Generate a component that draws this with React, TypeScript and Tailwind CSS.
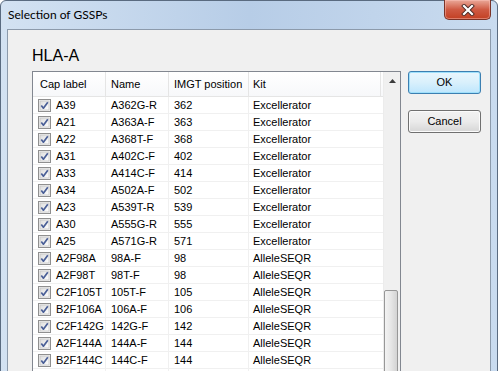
import React from "react";

const rows: [string, string, string, string][] = [
  ["A39", "A362G-R", "362", "Excellerator"],
  ["A21", "A363A-F", "363", "Excellerator"],
  ["A22", "A368T-F", "368", "Excellerator"],
  ["A31", "A402C-F", "402", "Excellerator"],
  ["A33", "A414C-F", "414", "Excellerator"],
  ["A34", "A502A-F", "502", "Excellerator"],
  ["A23", "A539T-R", "539", "Excellerator"],
  ["A30", "A555G-R", "555", "Excellerator"],
  ["A25", "A571G-R", "571", "Excellerator"],
  ["A2F98A", "98A-F", "98", "AlleleSEQR"],
  ["A2F98T", "98T-F", "98", "AlleleSEQR"],
  ["C2F105T", "105T-F", "105", "AlleleSEQR"],
  ["B2F106A", "106A-F", "106", "AlleleSEQR"],
  ["C2F142G", "142G-F", "142", "AlleleSEQR"],
  ["A2F144A", "144A-F", "144", "AlleleSEQR"],
  ["B2F144C", "144C-F", "144", "AlleleSEQR"],
];

function CheckBox() {
  return (
    <svg width="13" height="13" viewBox="0 0 13 13" className="shrink-0">
      <defs>
        <linearGradient id="cbg" x1="0" y1="0" x2="1" y2="1">
          <stop offset="0" stopColor="#dcdcdc" />
          <stop offset="1" stopColor="#ffffff" />
        </linearGradient>
      </defs>
      <rect x="0.5" y="0.5" width="12" height="12" fill="#f4f4f4" stroke="#8f8f8f" />
      <rect x="2" y="2" width="9" height="9" fill="url(#cbg)" stroke="#c6c6c6" strokeWidth="0.8" />
      <path d="M3.3 6.4 L5.4 9.2 L9.8 3.2" fill="none" stroke="#4a5f97" strokeWidth="1.7" strokeLinejoin="round" />
    </svg>
  );
}

function CloseButton() {
  return (
    <div className="mr-[6px] -mt-px w-[47px] h-[20px] rounded-b-[5px] border border-t-0 border-[#7a3328] bg-gradient-to-b from-[#e9a899] via-[#cf5a43] to-[#c23f22] flex items-center justify-center shadow-[inset_0_0_0_1px_rgba(255,200,190,0.45)]">
      <svg width="14" height="12" viewBox="0 0 14 12">
        <path d="M3 2 L11 10 M11 2 L3 10" stroke="#4a2a26" strokeWidth="4" strokeLinecap="square" />
        <path d="M3 2 L11 10 M11 2 L3 10" stroke="#ffffff" strokeWidth="2.2" strokeLinecap="square" />
      </svg>
    </div>
  );
}

export default function App() {
  const font = { fontFamily: '"Liberation Sans", Arial, sans-serif' };
  return (
    <div className="w-[498px] h-[371px] overflow-hidden">
      <div
        className="w-[498px] h-[420px] flex flex-col rounded-t-[6px] border border-[#5a6b80] bg-gradient-to-r from-[#d3e2f2] via-[#b7cde7] to-[#c9dbef]"
        style={font}
      >
        <div className="h-[28px] shrink-0 flex items-start justify-between">
          <span
            className="pl-[7px] pt-[6px] text-[12px] leading-[16px] text-black"
            style={{ fontFamily: 'Lato, "Liberation Sans", sans-serif' }}
          >
            Selection of GSSPs
          </span>
          <CloseButton />
        </div>
        <div className="mx-[6px] flex-1 border border-[#8c9aab] bg-[#f0f0f0] flex flex-col pl-[24px]">
          <div className="h-[41px] shrink-0 pt-[15px] text-[16px] leading-[22px] text-black">HLA-A</div>
          <div className="flex items-start">
            <div className="w-[369px] h-[320px] border border-[#828790] bg-white flex">
              <div className="w-[350px] flex flex-col text-[11px] text-black">
                <div className="h-[25px] shrink-0 flex border-b border-[#e5e5e5] bg-gradient-to-b from-white to-[#f7f8fa]">
                  <div className="w-[73px] border-r border-[#e5e5e5] pl-[7px] flex items-center">Cap label</div>
                  <div className="w-[63px] border-r border-[#e5e5e5] pl-[5px] flex items-center">Name</div>
                  <div className="w-[80px] border-r border-[#e5e5e5] pl-[5px] flex items-center">IMGT position</div>
                  <div className="w-[132px] border-r border-[#e5e5e5] pl-[4px] flex items-center">Kit</div>
                </div>
                {rows.map((r) => (
                  <div key={r[0]} className="h-[17px] shrink-0 flex border-b border-[#f0f0f0]">
                    <div className="w-[73px] border-r border-[#f0f0f0] pl-[5px] flex items-center gap-[5px]">
                      <CheckBox />
                      <span>{r[0]}</span>
                    </div>
                    <div className="w-[63px] border-r border-[#f0f0f0] pl-[5px] flex items-center">{r[1]}</div>
                    <div className="w-[80px] border-r border-[#f0f0f0] pl-[5px] flex items-center">{r[2]}</div>
                    <div className="w-[132px] pl-[4px] flex items-center">{r[3]}</div>
                  </div>
                ))}
                <div className="h-[17px] shrink-0 flex">
                  <div className="w-[73px] border-r border-[#f0f0f0]" />
                  <div className="w-[63px] border-r border-[#f0f0f0]" />
                  <div className="w-[80px] border-r border-[#f0f0f0]" />
                </div>
              </div>
              <div className="w-[17px] flex flex-col bg-[#f0f0f0] border-l border-[#ececec]">
                <div className="h-[17px] shrink-0 flex items-center justify-center">
                  <svg width="7" height="4" viewBox="0 0 7 4">
                    <path d="M3.5 0 L7 4 L0 4 Z" fill="#3c3c3c" />
                  </svg>
                </div>
                <div className="h-[201px] shrink-0" />
                <div className="mr-[2px] h-[120px] rounded-[2px] border border-[#979797] bg-gradient-to-r from-[#f3f3f3] via-[#e6e6e6] to-[#d3d3d3]" />
              </div>
            </div>
            <div className="ml-[7px] flex flex-col text-[11px] text-black">
              <button className="w-[73px] h-[23px] rounded-[3px] border border-[#3c7fb1] bg-gradient-to-b from-[#eaf6fd] via-[#d9f0fc] to-[#bee6fd] shadow-[inset_0_0_0_1px_#9fe0fb] flex items-center justify-center">
                OK
              </button>
              <button className="mt-[16px] w-[73px] h-[23px] rounded-[3px] border border-[#707070] bg-gradient-to-b from-[#f2f2f2] via-[#ebebeb] to-[#d6d6d6] shadow-[inset_0_0_0_1px_#fbfbfb] flex items-center justify-center">
                Cancel
              </button>
            </div>
          </div>
        </div>
      </div>
    </div>
  );
}
